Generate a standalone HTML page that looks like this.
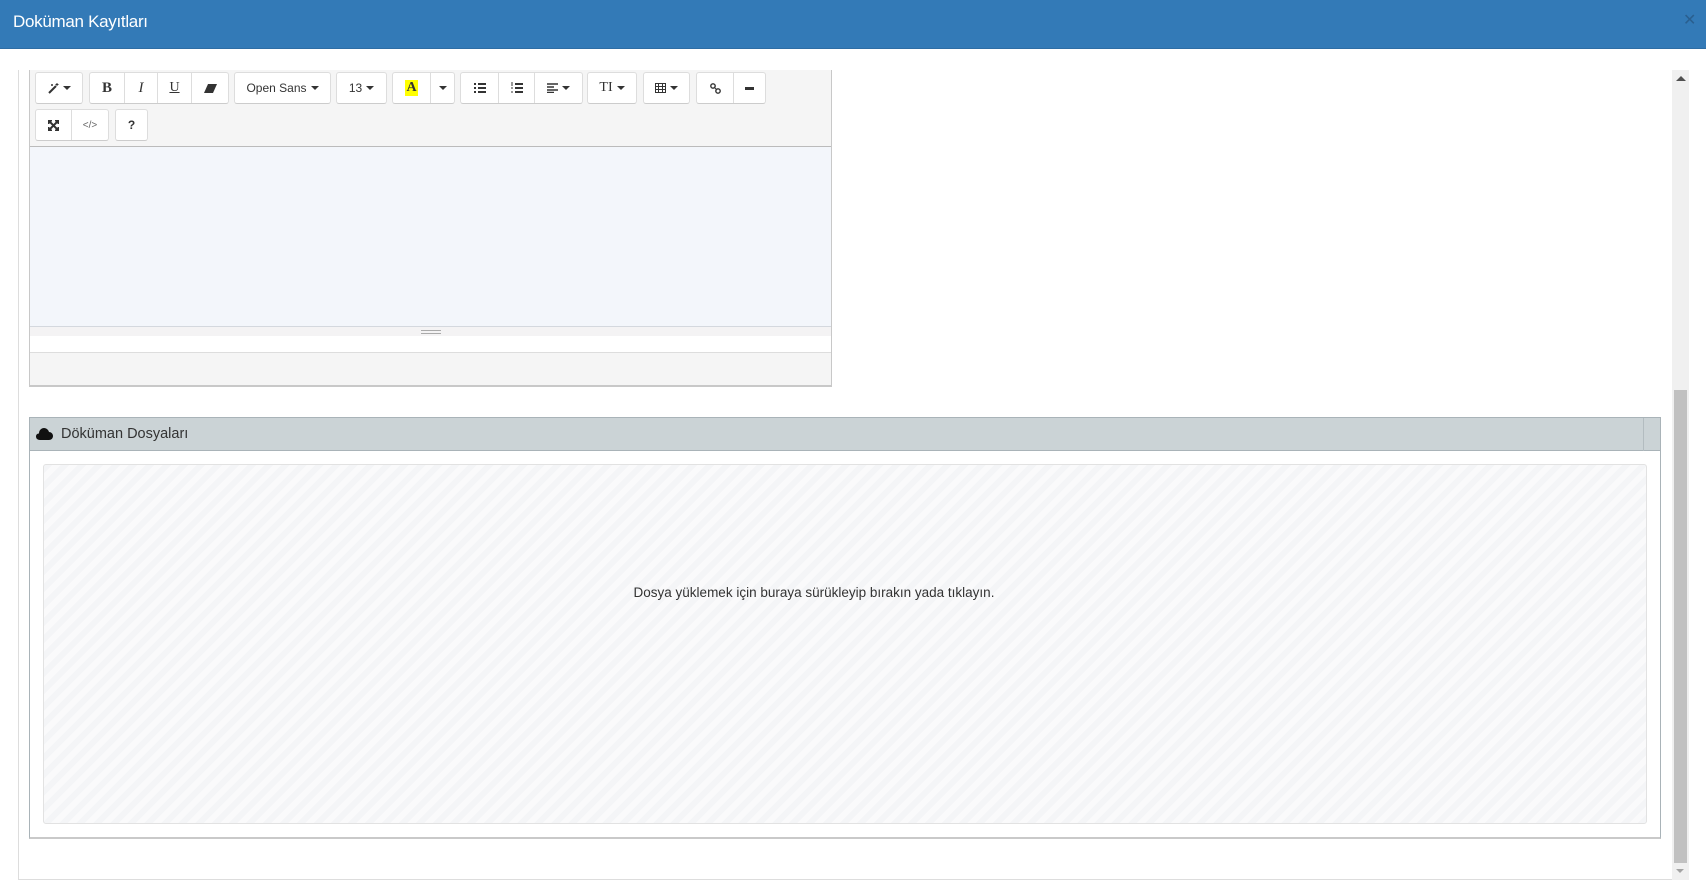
<!DOCTYPE html>
<html><head><meta charset="utf-8"><style>
*{box-sizing:border-box;margin:0;padding:0}
body{width:1706px;height:885px;overflow:hidden;background:#fff;font-family:"Liberation Sans",sans-serif;position:relative}
.hdr{position:absolute;left:0;top:0;width:1706px;height:49px;background:#337ab7;border-bottom:1px solid #2e6da4}
.hdr .t{position:absolute;left:13px;top:12px;color:#fff;font-size:17px;letter-spacing:-0.3px}
.hdr .x{position:absolute;left:1683px;top:10px;color:#2a5f8f;font-size:16px}
.outer{position:absolute;left:18px;top:70px;width:1654px;height:810px;border-left:1px solid #ddd;border-bottom:1px solid #ddd;background:#fff}
.sb{position:absolute;left:1672px;top:70px;width:17px;height:810px;background:#f0f0f0}
.sb .th{position:absolute;left:2px;top:320px;width:13px;height:473px;background:#c1c1c1}
.sb .up{position:absolute;left:4px;top:6px;width:0;height:0;border-left:5px solid transparent;border-right:5px solid transparent;border-bottom:5px solid #505050}
.sb .dn{position:absolute;left:4px;top:799px;width:0;height:0;border-left:4px solid transparent;border-right:4px solid transparent;border-top:4px solid #a3a3a3}
.ed{position:absolute;left:29px;top:70px;width:803px;height:317px;border:1px solid #c8c8c8;border-top:none;border-bottom:2px solid #c8c8c8;background:#f5f5f5}
.tb{position:absolute;left:0;top:0;width:801px;height:77px;border-bottom:1px solid #bbb;background:#f5f5f5}
.g{position:absolute;height:32px;border:1px solid #ddd;border-bottom-color:#ccc;background:#fff;border-radius:3px;display:flex}
.g span{height:100%;border-left:1px solid #ddd;display:flex;align-items:center;justify-content:center;font-size:12px;color:#333}
.g span:first-child{border-left:none}
.car{display:inline-block;width:0;height:0;border-left:4px solid transparent;border-right:4px solid transparent;border-top:4px solid #333;margin-left:4px;vertical-align:middle}
.area{position:absolute;left:0;top:77px;width:801px;height:180px;background:#f3f6fb;border-bottom:1px solid #d4d8de}
.rs{position:absolute;left:0;top:257px;width:801px;height:9px;background:#f4f3f4}
.rs i{position:absolute;left:391px;top:3px;width:20px;height:4px;border-top:1px solid #aaa;border-bottom:1px solid #aaa}
.wh{position:absolute;left:0;top:266px;width:801px;height:17px;background:#fff;border-bottom:1px solid #ddd}
.pn{position:absolute;left:29px;top:417px;width:1632px;height:422px;border:1px solid #a9b3b8;border-bottom:2px solid #c9c9c9;background:#fff}
.ph{position:absolute;left:0;top:0;width:1630px;height:33px;background:#cbd3d6;border-bottom:1px solid #a9b3b8}
.ph .dv{position:absolute;left:1613px;top:0;width:1px;height:33px;background:#b3bcc0}
.ph .tt{position:absolute;left:31px;top:8px;font-size:14.5px;color:#333}
.dz{position:absolute;left:13px;top:46px;width:1604px;height:360px;border:1px solid #e2e2e2;border-radius:3px;
background:repeating-linear-gradient(-45deg,#f4f5f7 0,#f4f5f7 6px,#fafafb 6px,#fafafb 12px)}
.dz p{position:absolute;left:-31px;top:120px;width:100%;text-align:center;font-size:13.5px;color:#333}
</style></head><body>
<div class="hdr"><div class="t">Doküman Kayıtları</div><div class="x">✕</div></div>
<div class="outer"></div>
<div class="ed">
 <div class="tb">
  <div class="g" style="left:5px;top:2px;width:48px"><span style="width:46px"><svg width="11" height="11"><path d="M1 10L8 3" stroke="#333" stroke-width="2"/><path d="M9 0v3M7.5 1.5h3M4 1v2M3 2h2" stroke="#333" stroke-width="1"/></svg><i class="car"></i></span></div>
  <div class="g" style="left:59px;top:2px;width:140px">
   <span style="width:34px;font-family:'Liberation Serif';font-weight:bold;font-size:15px">B</span>
   <span style="width:33px;font-family:'Liberation Serif';font-style:italic;font-size:15px">I</span>
   <span style="width:34px;font-family:'Liberation Serif';text-decoration:underline;font-size:14px">U</span>
   <span style="width:37px"><svg width="13" height="9"><path d="M4 0h9L9 9H0z" fill="#333"/></svg></span></div>
  <div class="g" style="left:204px;top:2px;width:97px"><span style="width:95px">Open Sans<i class="car"></i></span></div>
  <div class="g" style="left:306px;top:2px;width:51px"><span style="width:49px">13<i class="car"></i></span></div>
  <div class="g" style="left:362px;top:2px;width:63px"><span style="width:37px"><b style="background:#ff0;font-family:'Liberation Serif';font-size:14px;padding:0 1px">A</b></span><span style="width:24px"><i class="car" style="margin:0"></i></span></div>
  <div class="g" style="left:430px;top:2px;width:123px">
   <span style="width:37px"><svg width="12" height="10"><path d="M0 1h2M0 5h2M0 9h2M4 1h8M4 5h8M4 9h8" stroke="#333" stroke-width="2"/></svg></span>
   <span style="width:36px"><svg width="12" height="12"><path d="M4 2h8M4 6h8M4 10h8" stroke="#333" stroke-width="2"/><path d="M1 0v4M0 6h2M0 10h2" stroke="#333"/></svg></span>
   <span style="width:48px"><svg width="11" height="10"><path d="M0 1h11M0 4h7M0 7h11M0 9.5h7" stroke="#333" stroke-width="1.4"/></svg><i class="car"></i></span></div>
  <div class="g" style="left:557px;top:2px;width:50px"><span style="width:48px;font-family:'Liberation Serif';font-size:14px">TI<i class="car"></i></span></div>
  <div class="g" style="left:613px;top:2px;width:47px"><span style="width:45px"><svg width="11" height="10"><path d="M0.5 0.5h10v9h-10zM0.5 3.5h10M0.5 6.5h10M3.5 0.5v9M7.5 0.5v9" stroke="#333" fill="none"/></svg><i class="car"></i></span></div>
  <div class="g" style="left:666px;top:2px;width:70px"><span style="width:36px"><svg width="11" height="11"><circle cx="3" cy="3" r="2.2" stroke="#333" fill="none" stroke-width="1.4"/><circle cx="8" cy="8" r="2.2" stroke="#333" fill="none" stroke-width="1.4"/><path d="M4 4l3 3" stroke="#333"/></svg></span><span style="width:32px"><i style="width:9px;height:3px;background:#333;display:block"></i></span></div>
  <div class="g" style="left:5px;top:39px;width:74px"><span style="width:35px"><svg width="11" height="11"><path d="M1 1l9 9M10 1l-9 9" stroke="#333" stroke-width="2"/><path d="M0 0h4v1.5H1.5V4H0zM11 0H7v1.5h2.5V4H11zM0 11h4V9.5H1.5V7H0zM11 11H7V9.5h2.5V7H11z" fill="#333"/></svg></span><span style="width:37px;font-size:10px;color:#666">&lt;/&gt;</span></div>
  <div class="g" style="left:85px;top:39px;width:33px"><span style="width:31px;font-weight:bold;font-size:12px">?</span></div>
 </div>
 <div class="area"></div>
 <div class="rs"><i></i></div>
 <div class="wh"></div>
</div>
<div class="pn">
 <div class="ph"><svg style="position:absolute;left:6px;top:9px" width="17" height="13"><path d="M4 13C1 13 0 11 0 9.5 0 7.5 1.5 6.5 3 6.5 3 3 5.5 1 8 1c2.5 0 4.5 2 5 4 2 0 4 1.5 4 4s-2 4-4 4z" fill="#111"/></svg><div class="tt">Döküman Dosyaları</div><div class="dv"></div></div>
 <div class="dz"><p>Dosya yüklemek için buraya sürükleyip bırakın yada tıklayın.</p></div>
</div>
<div class="sb"><div class="up"></div><div class="th"></div><div class="dn"></div></div>
</body></html>
